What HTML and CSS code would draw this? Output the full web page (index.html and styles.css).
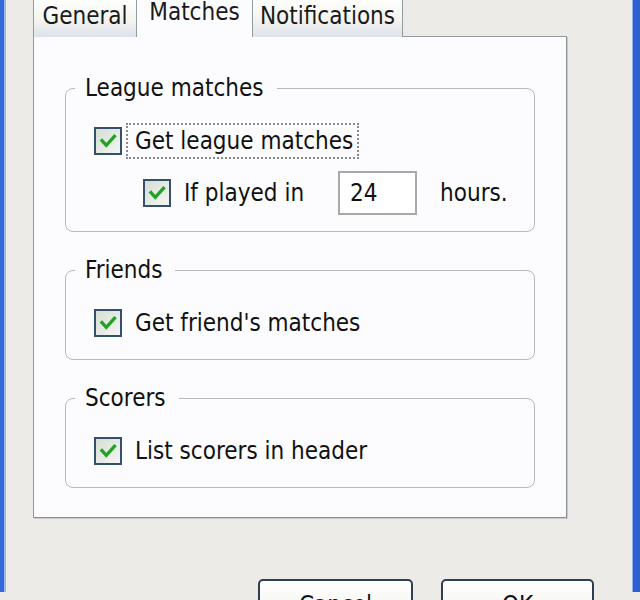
FILE: index.html
```html
<!DOCTYPE html>
<html lang="en">
<head>
    <meta charset="UTF-8">
    <meta name="viewport" content="width=device-width, initial-scale=1.0">
    <title>Options</title>
    <link rel="stylesheet" href="styles.css">
</head>
<body>
    <div class="window">
        <div class="dialog">
            <div class="tabs">
                <div class="tab">General</div>
                <div class="tab tab-active">Matches</div>
                <div class="tab">Notifications</div>
            </div>

            <div class="panel">
                <fieldset class="group">
                    <legend>League matches</legend>
                    <label class="row">
                        <span class="box"><svg viewBox="0 0 28 28"><path d="M7 13.5 L12 19 L21.5 8.5"/></svg></span>
                        <span class="text focus">Get league matches</span>
                    </label>
                    <div class="row row-sub">
                        <span class="box"><svg viewBox="0 0 28 28"><path d="M7 13.5 L12 19 L21.5 8.5"/></svg></span>
                        <span class="text">If played in</span>
                        <input class="hours" type="text" value="24">
                        <span class="unit">hours.</span>
                    </div>
                </fieldset>

                <fieldset class="group">
                    <legend>Friends</legend>
                    <label class="row">
                        <span class="box"><svg viewBox="0 0 28 28"><path d="M7 13.5 L12 19 L21.5 8.5"/></svg></span>
                        <span class="text">Get friend's matches</span>
                    </label>
                </fieldset>

                <fieldset class="group">
                    <legend>Scorers</legend>
                    <label class="row">
                        <span class="box"><svg viewBox="0 0 28 28"><path d="M7 13.5 L12 19 L21.5 8.5"/></svg></span>
                        <span class="text">List scorers in header</span>
                    </label>
                </fieldset>
            </div>

            <div class="buttons">
                <button class="btn btn-cancel">Cancel</button>
                <button class="btn btn-ok">OK</button>
            </div>
        </div>
    </div>
</body>
</html>
```

FILE: styles.css
```css
body {
    margin: 0;
    height: 600px;
    overflow: hidden;
    background-color: #ecebe8;
    font-family: "DejaVu Sans Condensed", "DejaVu Sans", sans-serif;
    font-size: 24px;
    color: #111;
}

.window {
    height: 600px;
    border-left: 4px solid #3768d8;
    border-right: 7px solid #2e60d0;
    box-shadow: inset 2px 0 0 #9db8ee, inset -1px 0 0 #8fb0ea;
    background-color: #ecebe8;
}

.dialog {
    padding-left: 29px;
    width: 534px;
}

/* tab strip */
.tabs {
    display: flex;
    align-items: flex-end;
    height: 45px;
    margin-top: -8px;
    position: relative;
    z-index: 1;
}

.tab {
    box-sizing: border-box;
    height: 41px;
    padding: 0 0 3px;
    display: flex;
    align-items: center;
    justify-content: center;
    border: 1px solid #919b9c;
    border-bottom: none;
    border-radius: 4px 4px 0 0;
    background: linear-gradient(#ffffff, #f3f3ef 60%, #dde2ec);
    color: #1a1a1a;
}

.tab:nth-child(1) {
    width: 104px;
}

.tab:nth-child(3) {
    width: 151px;
}

.tab-active {
    width: 117px;
    height: 46px;
    margin: 0 -1px 0 -1px;
    padding-bottom: 6px;
    background: #fcfcfe;
    box-shadow: inset 0 2px 0 #fbe6a6;
    position: relative;
    z-index: 2;
}

/* tab page */
.panel {
    box-sizing: border-box;
    height: 482px;
    margin-top: -1px;
    padding: 36px 31px 0;
    border: 1px solid #919b9c;
    border-right-color: #8a9293;
    border-bottom-color: #8a9293;
    box-shadow: 1px 1px 0 #c9c9c4;
    background-color: #fcfcfe;
}

.group {
    margin: 0 0 23px;
    padding: 18px 0 16px;
    border: 1px solid #b9b9b6;
    border-radius: 8px;
}

.group legend {
    margin-left: 9px;
    padding: 0 13px 0 10px;
    line-height: 30px;
}

.row {
    display: flex;
    align-items: center;
    height: 40px;
    margin-left: 28px;
}

.row-sub {
    height: 44px;
    margin: 10px 0 0 77px;
}

.box {
    box-sizing: border-box;
    width: 28px;
    height: 28px;
    border: 2px solid #34506b;
    background: linear-gradient(135deg, #d6ddd3, #f4f6f3);
    flex-shrink: 0;
}

.box svg {
    display: block;
    width: 24px;
    height: 24px;
}

.box path {
    fill: none;
    stroke: #22a124;
    stroke-width: 3.8;
    stroke-linecap: square;
}

.text {
    margin-left: 4px;
    padding: 0 4px 0 7px;
    line-height: 32px;
    border: 2px dotted transparent;
}

.text.focus {
    border-color: #8a8a8a;
}

.hours {
    box-sizing: border-box;
    width: 79px;
    height: 44px;
    margin-left: 28px;
    padding: 0 10px;
    border: 2px solid #a8aaa8;
    background: #fff;
    font: inherit;
    color: #111;
}

.unit {
    margin-left: 23px;
}

/* dialog buttons */
.buttons {
    display: flex;
    justify-content: flex-end;
    gap: 28px;
    padding-top: 61px;
    width: 590px;
    margin-left: -29px;
}

.btn {
    box-sizing: border-box;
    width: 155px;
    height: 52px;
    border: 2px solid #2f3f52;
    border-radius: 5px;
    background: linear-gradient(#ffffff, #f2f2ee 70%, #dcdcd4);
    font: inherit;
    color: #111;
}

.btn-ok {
    width: 153px;
}
```
